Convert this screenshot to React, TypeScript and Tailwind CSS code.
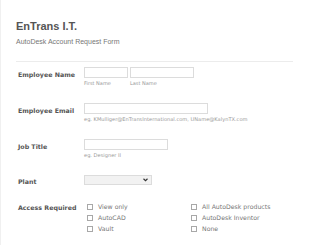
import React from 'react';

const Checkbox = ({ label }: { label: string }) => (
  <div className="flex items-center h-[11px]">
    <span className="w-[6px] h-[6px] border border-[#a8a8a8] bg-white mr-[5px] ml-[3px]" />
    <span className="text-[6.2px] text-[#777]">{label}</span>
  </div>
);

const App = () => {
  return (
    <div className="w-[310px] h-[245px] bg-white border-l border-[#f0f0f0] font-['DejaVu_Sans',sans-serif] overflow-hidden">
      <div className="pl-[15px] pr-[17px] pt-[20px]">
        <h1 className="font-['Liberation_Sans',Arial,sans-serif] font-bold text-[11px] leading-[12px] text-[#555]">
          EnTrans I.T.
        </h1>
        <p className="font-['Liberation_Sans',Arial,sans-serif] text-[7px] leading-[8px] text-[#777] mt-[6px]">
          AutoDesk Account Request Form
        </p>
        <div className="border-t border-[#ececec] mt-[15px]" />
      </div>

      <div className="pl-[17px] pt-[5px]">
        {/* employee name */}
        <div className="flex h-[36px]">
          <div className="w-[66px] pt-[3px] text-[6.3px] font-bold text-[#555]">Employee Name</div>
          <div className="flex gap-[2px]">
            <div>
              <div className="w-[44px] h-[11px] border border-[#dcdcdc] bg-white" />
              <div className="text-[5px] text-[#999] mt-[2px]">First Name</div>
            </div>
            <div>
              <div className="w-[64px] h-[11px] border border-[#dcdcdc] bg-white" />
              <div className="text-[5px] text-[#999] mt-[2px]">Last Name</div>
            </div>
          </div>
        </div>

        {/* email */}
        <div className="flex h-[36px]">
          <div className="w-[66px] pt-[3px] text-[6.3px] font-bold text-[#555]">Employee Email</div>
          <div>
            <div className="w-[124px] h-[11px] border border-[#dcdcdc] bg-white" />
            <div className="text-[5.1px] text-[#999] mt-[2px] whitespace-nowrap">
              eg. KMulliger@EnTransInternational.com, UName@KalynTX.com
            </div>
          </div>
        </div>

        {/* job title */}
        <div className="flex h-[36px]">
          <div className="w-[66px] pt-[3px] text-[6.3px] font-bold text-[#555]">Job Title</div>
          <div>
            <div className="w-[84px] h-[11px] border border-[#dcdcdc] bg-white" />
            <div className="text-[5.1px] text-[#999] mt-[2px]">eg. Designer II</div>
          </div>
        </div>

        {/* plant */}
        <div className="flex h-[26px]">
          <div className="w-[66px] pt-[2px] text-[6.3px] font-bold text-[#555]">Plant</div>
          <div className="w-[68px] h-[10px] border border-[#dcdcdc] bg-[#f2f2f2] flex items-center justify-end pr-[3px]">
            <svg width="5" height="4" viewBox="0 0 10 8">
              <path d="M1 1.5 L5 5.5 L9 1.5" stroke="#333" strokeWidth="2.2" fill="none" />
            </svg>
          </div>
        </div>

        {/* access */}
        <div className="flex">
          <div className="w-[66px] pt-[2px] text-[6.3px] font-bold text-[#555]">Access Required</div>
          <div className="grid grid-cols-[104px_1fr]">
            <div>
              <Checkbox label="View only" />
              <Checkbox label="AutoCAD" />
              <Checkbox label="Vault" />
            </div>
            <div>
              <Checkbox label="All AutoDesk products" />
              <Checkbox label="AutoDesk Inventor" />
              <Checkbox label="None" />
            </div>
          </div>
        </div>
      </div>
    </div>
  );
};

export default App;
